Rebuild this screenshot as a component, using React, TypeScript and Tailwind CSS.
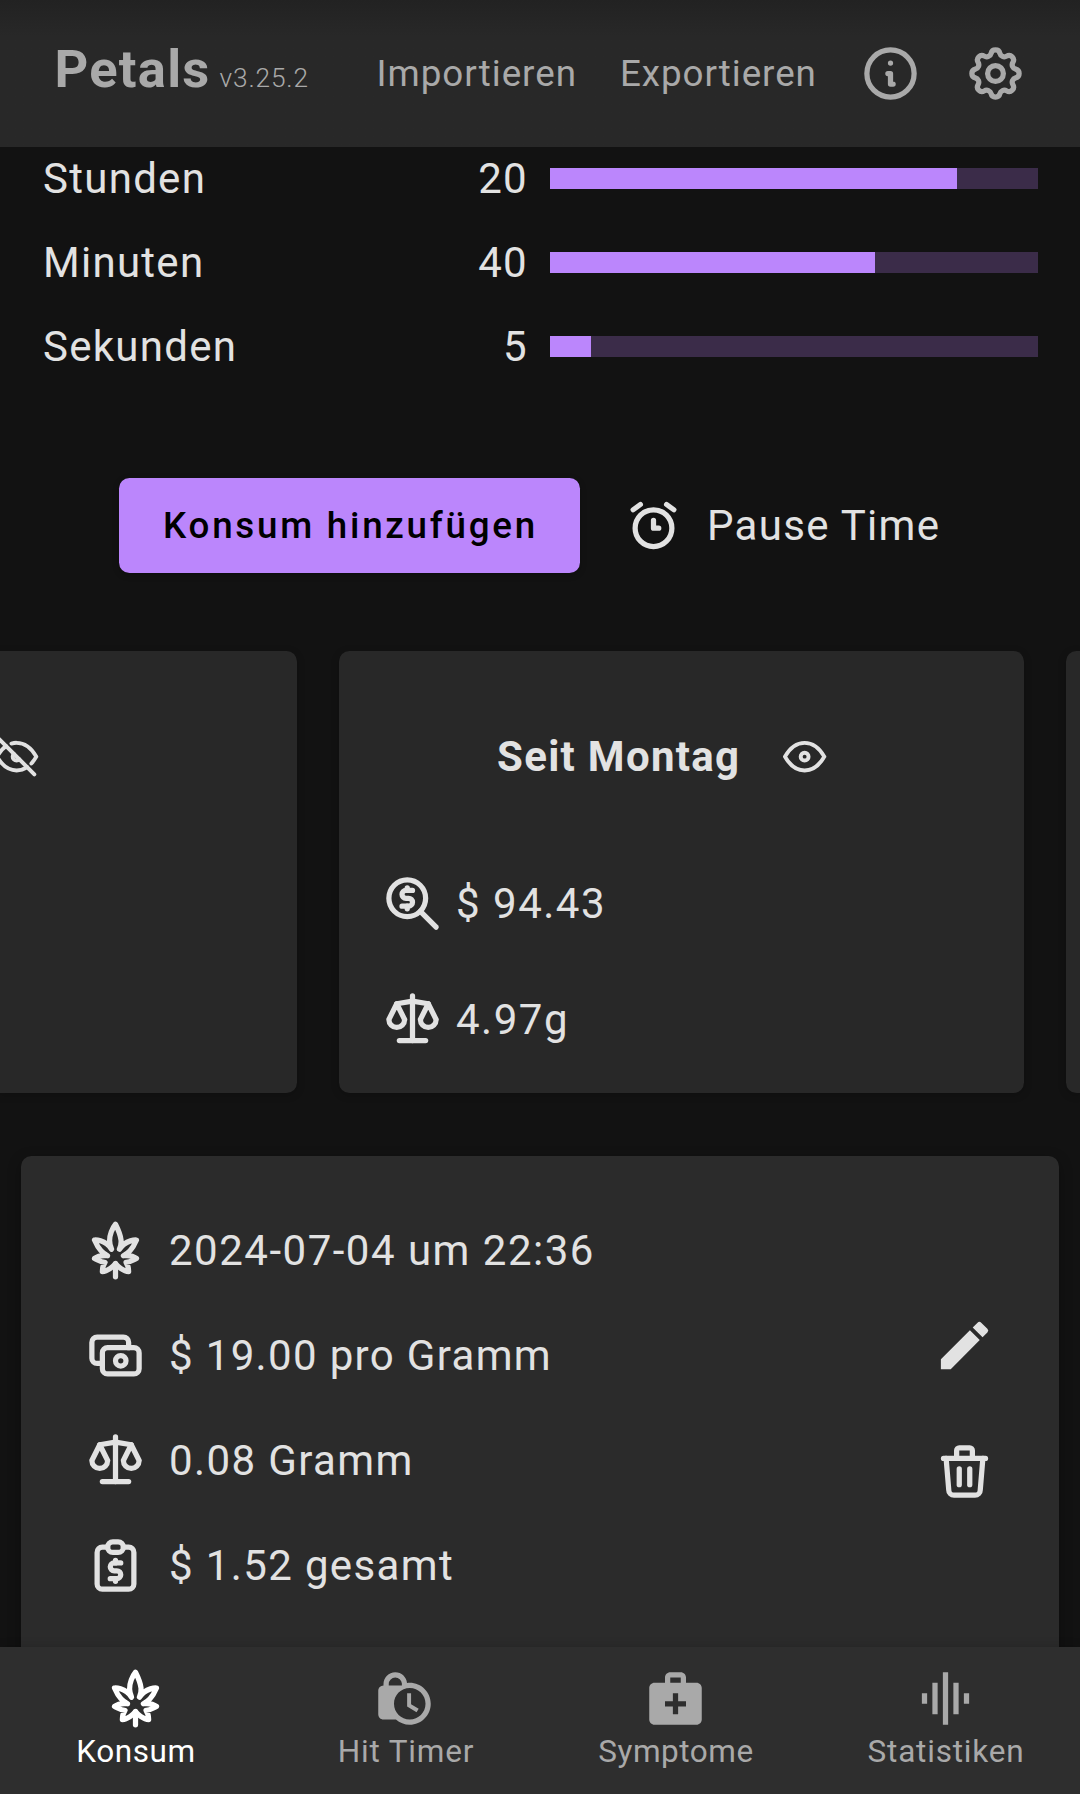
import type { ReactNode } from 'react';
import { MdEdit, MdGraphicEq, MdLockClock, MdMedicalServices } from 'react-icons/md';
import { TbAlarm, TbCannabis, TbReportMoney, TbScale, TbSettings, TbTrash, TbZoomMoney } from 'react-icons/tb';

const ICON = 63;

function Stroke({ size = ICON, children }: { size?: number; children: ReactNode }) {
  return (
    <svg
      width={size}
      height={size}
      viewBox="0 0 24 24"
      fill="none"
      stroke="currentColor"
      strokeWidth="2"
      strokeLinecap="round"
      strokeLinejoin="round"
      className="shrink-0"
    >
      {children}
    </svg>
  );
}

const InfoIcon = () => (
  <Stroke>
    <circle cx="12" cy="12" r="9" />
    <path d="M12 8h.01M11 12h1v4h1" />
  </Stroke>
);

const CashIcon = () => (
  <Stroke>
    <rect x="7" y="9" width="14" height="10" rx="2" />
    <circle cx="14" cy="14" r="2" />
    <path d="M17 9V7a2 2 0 0 0-2-2H5a2 2 0 0 0-2 2v6a2 2 0 0 0 2 2h2" />
  </Stroke>
);

const EyeIcon = () => (
  <Stroke size={47.25}>
    <circle cx="12" cy="12" r="2" />
    <path d="M22 12c-2.667 4.667-6 7-10 7s-7.333-2.333-10-7c2.667-4.667 6-7 10-7s7.333 2.333 10 7" />
  </Stroke>
);

const EyeOffIcon = () => (
  <Stroke size={47.25}>
    <path d="M3 3l18 18" />
    <path d="M10.584 10.587a2 2 0 0 0 2.828 2.83" />
    <path d="M9.363 5.365a9.466 9.466 0 0 1 2.637-.365c4 0 7.333 2.333 10 7c-.778 1.361-1.612 2.524-2.503 3.488m-2.14 1.861c-1.631 1.1-3.415 1.651-5.357 1.651c-4 0-7.333-2.333-10-7c1.369-2.395 2.913-4.175 4.632-5.341" />
  </Stroke>
);

const timers = [
  { label: 'Stunden', value: 20, max: 24 },
  { label: 'Minuten', value: 40, max: 60 },
  { label: 'Sekunden', value: 5, max: 60 },
];

const details = [
  { icon: <TbCannabis size={ICON} />, text: '2024-07-04 um 22:36', spacing: 'tracking-[1.5px]' },
  { icon: <CashIcon />, text: '$ 19.00 pro Gramm', spacing: 'tracking-[1.34px]' },
  { icon: <TbScale size={ICON} />, text: '0.08 Gramm', spacing: 'tracking-[1.38px]' },
  { icon: <TbReportMoney size={ICON} />, text: '$ 1.52 gesamt', spacing: 'tracking-[1.37px]' },
];

const tabs = [
  { icon: <TbCannabis size={ICON} />, label: 'Konsum', color: 'text-white', spacing: 'tracking-[0.55px]' },
  { icon: <MdLockClock size={ICON} className="-ml-[2px]" />, label: 'Hit Timer', color: 'text-[#a9a9a9]', spacing: 'tracking-[0.82px]' },
  { icon: <MdMedicalServices size={ICON} />, label: 'Symptome', color: 'text-[#a9a9a9]', spacing: 'tracking-[0.55px]' },
  { icon: <MdGraphicEq size={ICON} />, label: 'Statistiken', color: 'text-[#a9a9a9]', spacing: 'tracking-[0.8px]' },
];

function Header() {
  return (
    <header className="flex h-[147px] shrink-0 items-center bg-linear-to-b from-[#222222] to-[#282828] to-[36px] pl-[54.5px] text-[#a9a9a9]">
      <div className="flex w-[322px] items-baseline gap-[9px] pb-[10px]">
        <h1 className="text-[52.5px] leading-[60px] font-bold tracking-[1.24px]">Petals</h1>
        <span className="text-[26.25px] font-light tracking-[0.85px]">v3.25.2</span>
      </div>
      <button className="w-[243.5px] pt-[2px] text-left text-[36.75px] tracking-[1px]">Importieren</button>
      <button className="w-[239px] pt-[2px] text-left text-[36.75px] tracking-[0.95px]">Exportieren</button>
      <div className="flex gap-[42px]">
        <InfoIcon />
        <TbSettings size={ICON} />
      </div>
    </header>
  );
}

function Timers() {
  return (
    <section className="-mt-[10.5px]">
      {timers.map((t) => (
        <div key={t.label} className="flex h-[84px] items-center gap-[22px] pr-[42px] pl-[43px]">
          <div className="flex w-[485px] justify-between tracking-[1.28px]">
            <span>{t.label}</span>
            <span>{t.value}</span>
          </div>
          <div className="h-[21px] w-[488px] bg-[#3b2c49]">
            <div className="h-full bg-[#bb86fc]" style={{ width: `${(t.value / t.max) * 100}%` }} />
          </div>
        </div>
      ))}
    </section>
  );
}

const card = 'h-[442px] shrink-0 bg-[#282828] shadow-[0_2px_8px_rgba(0,0,0,0.2)]';

export default function App() {
  return (
    <div className="flex h-[1794px] w-[1080px] flex-col overflow-hidden bg-[#121212] font-[Roboto,sans-serif] text-[42px] leading-none text-[#e2e2e2]">
      <Header />
      <main className="flex min-h-0 flex-1 flex-col overflow-hidden">
        <div className="shrink-0">
          <Timers />
          <div className="mt-[89.5px] flex h-[95px] items-center pl-[119px]">
            <button className="flex h-[95px] w-[461px] items-center justify-center rounded-[10.5px] bg-[#bb86fc] pt-[2px] pl-[2px] text-[36.75px] font-medium tracking-[2.75px] text-black shadow-[0_2px_6px_rgba(0,0,0,0.25)]">
              Konsum hinzufügen
            </button>
            <button className="ml-[42px] flex items-center gap-[22px] tracking-[1.31px]">
              <TbAlarm size={ICON} />
              Pause Time
            </button>
          </div>

          <div className="mt-[78px] flex gap-[42px]">
            <section className={`${card} w-[297px] rounded-r-[10.5px] pt-[74px]`}>
              <div className="-ml-[7.5px] flex h-[63px] items-center">
                <EyeOffIcon />
              </div>
            </section>
            <section className={`${card} w-[685px] rounded-[10.5px] pt-[74px] pl-[42px]`}>
              <div className="flex h-[63px] items-center pl-[116px]">
                <h2 className="w-[284px] font-bold tracking-[1.31px]">Seit Montag</h2>
                <EyeIcon />
              </div>
              <div className="mt-[83.75px] flex items-center gap-[12px] tracking-[1.5px]">
                <TbZoomMoney size={ICON} />
                <span className="pt-[2px]">$ 94.43</span>
              </div>
              <div className="mt-[53px] flex items-center gap-[12px] tracking-[1.5px]">
                <TbScale size={ICON} />
                <span className="pt-[2px]">4.97g</span>
              </div>
            </section>
            <section className={`${card} w-[14px] rounded-l-[10.5px]`} />
          </div>

          <section className="mx-[21px] mt-[63px] flex h-[520px] justify-between rounded-t-[10.5px] bg-[#2b2b2b] pt-[62.75px] pr-[63px] pl-[63px] shadow-[0_4px_14px_rgba(0,0,0,0.3)]">
            <div className="flex flex-col gap-[42px]">
              {details.map((d) => (
                <div key={d.text} className="flex h-[63px] items-center gap-[22px]">
                  {d.icon}
                  <span className={`pt-[2px] ${d.spacing}`}>{d.text}</span>
                </div>
              ))}
            </div>
            <div className="flex flex-col gap-[63px] pt-[95.5px]">
              <MdEdit size={ICON} />
              <TbTrash size={ICON} />
            </div>
          </section>
        </div>
      </main>
      <nav className="relative grid h-[147px] shrink-0 grid-cols-4 bg-[#2e2e2e] shadow-[0_-2px_8px_rgba(0,0,0,0.12)]">
        {tabs.map((t) => (
          <button
            key={t.label}
            className={`flex flex-col items-center pt-[19.75px] text-[31.5px] leading-[37px] ${t.color} ${t.spacing}`}
          >
            {t.icon}
            <span className="mt-[3px] pl-[2px]">{t.label}</span>
          </button>
        ))}
      </nav>
    </div>
  );
}
